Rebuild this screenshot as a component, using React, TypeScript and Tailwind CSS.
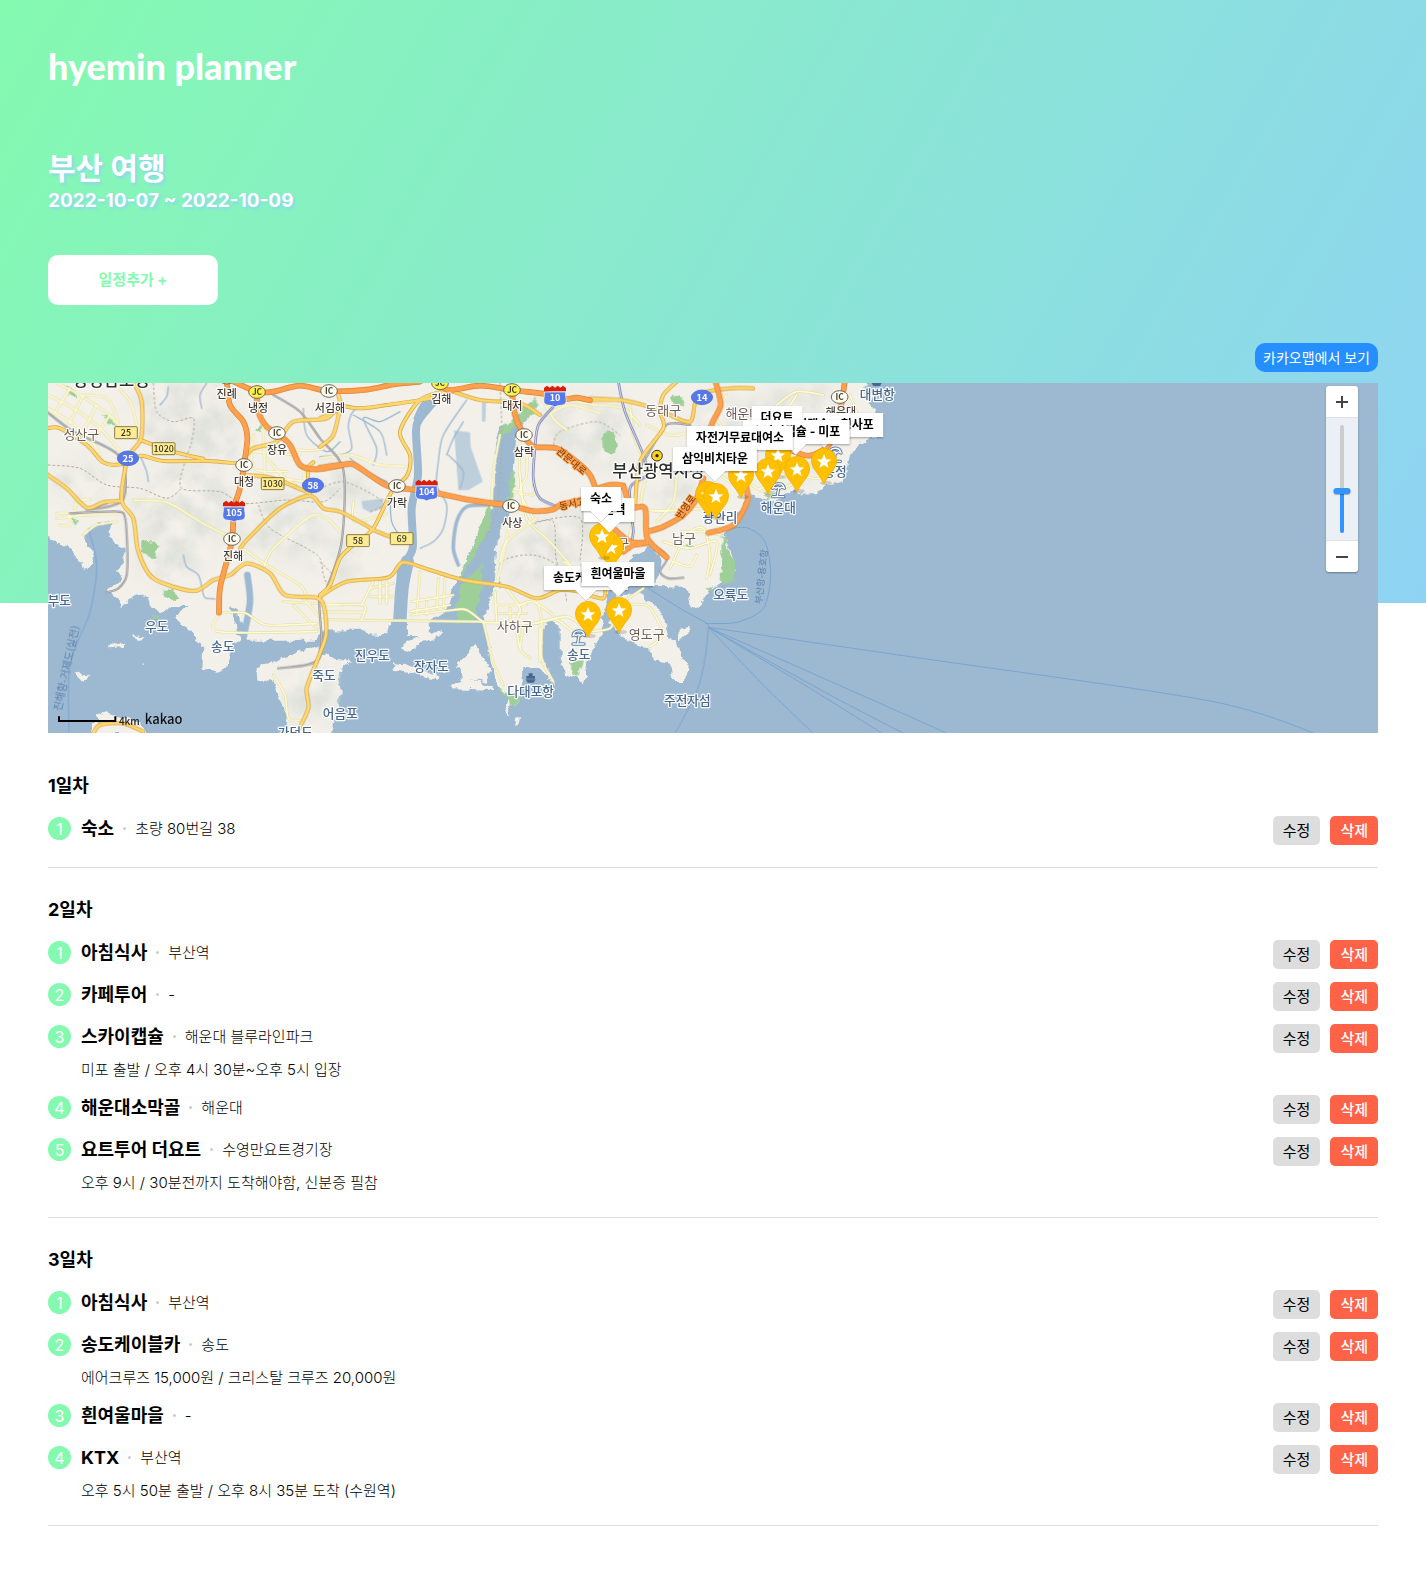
import React, { useState } from "react";

/* ---------- trip data ---------- */

type Plan = { title: string; place: string; note?: string };
type Day = { name: string; plans: Plan[] };

const days: Day[] = [
  { name: "1일차", plans: [{ title: "숙소", place: "초량 80번길 38" }] },
  {
    name: "2일차",
    plans: [
      { title: "아침식사", place: "부산역" },
      { title: "카페투어", place: "-" },
      { title: "스카이캡슐", place: "해운대 블루라인파크", note: "미포 출발 / 오후 4시 30분~오후 5시 입장" },
      { title: "해운대소막골", place: "해운대" },
      { title: "요트투어 더요트", place: "수영만요트경기장", note: "오후 9시 / 30분전까지 도착해야함, 신분증 필참" },
    ],
  },
  {
    name: "3일차",
    plans: [
      { title: "아침식사", place: "부산역" },
      { title: "송도케이블카", place: "송도", note: "에어크루즈 15,000원 / 크리스탈 크루즈 20,000원" },
      { title: "흰여울마을", place: "-" },
      { title: "KTX", place: "부산역", note: "오후 5시 50분 출발 / 오후 8시 35분 도착 (수원역)" },
    ],
  },
];

/* ---------- map drawing ---------- */

type Pt = [number, number];
const parse = (s: string): Pt[] => s.trim().split(/\s+/).map((p) => p.split(",").map(Number) as Pt);

/* Catmull-Rom curve through the points */
function curve(s: string, closed = false) {
  const p = parse(s);
  const n = p.length;
  const at = (i: number): Pt => (closed ? p[(i + n) % n] : p[Math.max(0, Math.min(n - 1, i))]);
  let d = `M${p[0][0]},${p[0][1]}`;
  for (let i = 0; i < (closed ? n : n - 1); i++) {
    const [a, b, c, e] = [at(i - 1), at(i), at(i + 1), at(i + 2)];
    d += `C${b[0] + (c[0] - a[0]) / 7},${b[1] + (c[1] - a[1]) / 7} ${c[0] - (e[0] - b[0]) / 7},${c[1] - (e[1] - b[1]) / 7} ${c[0]},${c[1]}`;
  }
  return closed ? d + "Z" : d;
}
const poly = (s: string) => "M" + s.trim().split(/\s+/).join("L") + "Z";

/* The map is drawn in three sheets; each has its own origin. */
const WEST = "translate(-24 -24)";
const MID = "translate(816 -24)";
const EAST = "translate(1446 -24)";

const land: [string, string[]][] = [
  [
    WEST,
    [
      "0,0 920,0 920,766 620,766 600,740 590,700 570,690 600,800 576,800 570,865 535,890 487,880 490,810 470,800 460,770 420,750 410,720 440,690 400,690 360,715 350,695 330,690 320,670 290,655 235,700 240,680 200,650 235,625 250,600 225,590 255,560 250,520 220,500 205,470 212,445 160,450 128,478 140,500 155,530 155,565 135,592 130,570 100,540 80,510 40,505 24,485 0,485",
      "620,720 650,700 700,720 920,740 920,766 840,766 835,797 626,797 612,760",
      "650,880 835,808 840,845 760,870 700,915 652,920",
      "690,910 740,880 835,842 860,840 880,850 935,860 900,885 905,960 870,1080 735,1080 745,1020 715,960",
      "160,1080 150,1050 185,1048 165,1010 230,1022 290,1040 330,1080",
      "105,895 125,890 148,908 130,920",
      "205,812 250,800 248,815 215,820",
      "268,784 290,778 318,786 295,792",
      "300,866 308,862 310,870",
    ],
  ],
  [
    MID,
    [
      "-20,0 700,0 700,60 540,160 528,210 525,320 490,440 400,640 385,700 330,738 325,780 258,780 262,736 212,740 205,778 145,775 138,764 -20,764",
      "245,820 280,785 370,765 360,782 300,810 270,830",
      "218,862 250,865 320,890 360,905 355,918 290,900 225,884",
      "464,806 485,840 508,880 500,920 450,910 520,935 515,945 400,940 395,930 430,920 410,870 430,850 450,830",
      "700,0 840,0 840,700 848,770 825,810 805,860 800,905 785,925 765,905 735,890 722,850 722,750 690,735 665,760 668,860 690,890 700,935 680,900 650,880 615,875 600,890 608,965 575,970 545,945 525,910 505,820 490,740 520,640 530,500 555,440 580,300 590,170 640,110",
      "360,882 385,880 375,890",
      "568,970 590,965 600,975 570,1000 565,1018 555,1010",
      "585,1052 590,1030 600,1030 595,1050",
    ],
  ],
  [
    EAST,
    [
      "170,0 1020,0 1000,50 1038,60 1018,90 1055,130 1040,190 1010,195 985,205 960,240 948,290 940,325 890,330 860,360 815,362 790,345 740,375 690,372 650,355 640,400 600,455 580,478 600,530 617,590 545,640 525,670 505,692 480,695 470,640 455,635 370,632 390,600 395,550 352,510 300,555 265,590 235,640 222,700 218,765 170,800 150,850 130,800 110,740 100,700 100,300",
      "232,700 260,662 330,655 362,688 400,720 415,790 440,800 452,850 482,868 480,885 462,915 430,915 425,870 358,848 355,820 310,808 270,780 240,745",
      "440,780 455,762 482,755 480,768 450,798",
    ],
  ],
];

const hills: [string, number, number, number, number][] = [
  [WEST, 400, 120, 130, 110],
  [WEST, 430, 400, 150, 140],
  [WEST, 120, 320, 100, 60],
  [WEST, 520, 200, 80, 170],
  [WEST, 720, 450, 140, 100],
  [WEST, 390, 560, 90, 70],
  [WEST, 780, 960, 50, 90],
  [WEST, 470, 60, 90, 60],
  [MID, 70, 330, 100, 70],
  [MID, 60, 560, 90, 60],
  [MID, 790, 160, 120, 100],
  [MID, 660, 560, 120, 90],
  [MID, 10, 960, 40, 90],
  [MID, 820, 430, 100, 60],
  [EAST, 190, 170, 120, 110],
  [EAST, 600, 150, 110, 90],
  [EAST, 820, 90, 120, 70],
  [EAST, 90, 500, 90, 90],
  [EAST, 440, 360, 70, 60],
  [EAST, 830, 280, 60, 40],
];

const parks: [string, string[]][] = [
  [
    WEST,
    [
      "305,500 325,498 355,512 352,545 320,545 300,525",
      "370,645 395,642 415,668 400,675 375,668",
      "65,30 95,45 120,75 90,60",
      "180,115 210,130 235,155 205,145",
      "640,165 670,150 665,175",
      "90,430 120,445 100,450",
      "335,725 352,728 348,740",
    ],
  ],
  [
    MID,
    [
      "655,65 640,120 580,160 535,195 545,160 600,110",
      "518,380 505,470 470,530 425,600 412,612 450,530 480,460 500,400",
      "570,295 586,293 580,370 568,380",
      "492,562 485,640 470,700 455,750 435,740 408,745 415,660 440,610",
      "850,190 865,165 885,180 888,230 870,240 852,220",
      "760,860 790,855 770,910 752,880",
      "530,935 565,955 605,970 575,995 565,970",
      "530,612 550,620 545,630",
    ],
  ],
  [
    EAST,
    [
      "222,190 235,165 250,175 258,230 240,240 222,225",
      "420,62 450,68 468,90 440,92 425,80",
      "575,490 582,484 595,530 618,575 608,620 585,632 572,600",
      "705,360 720,352 722,368 708,375",
      "118,862 168,855 140,905",
      "530,635 548,630 550,645",
      "465,510 485,505 500,520 480,525",
    ],
  ],
];

const streams: [string, string][] = [
  [WEST, "500,24 480,60 485,100"],
  [WEST, "385,35 380,65 360,90"],
  [WEST, "300,240 320,290 325,320"],
  [WEST, "430,540 440,575 475,600 488,650 495,668 525,672"],
  [WEST, "900,200 860,230 800,180 790,100"],
  [MID, "190,95 110,100 85,150 95,220 60,240 0,245"],
  [MID, "90,250 140,290 200,320"],
  [MID, "210,350 215,440 245,490"],
  [MID, "440,75 370,180 355,260 350,330 380,390 370,460 340,500 300,520"],
  [MID, "240,110 180,140 130,130 170,220 160,270"],
  [MID, "100,120 180,170 200,240"],
  [MID, "430,140 400,190 380,240"],
  [MID, "385,240 430,290 420,340"],
];
const rivers: [string, string, number][] = [
  [MID, "350,70 300,130 288,170 294,300 275,400 278,520 245,580 240,650 228,780", 24],
  [MID, "350,60 310,90 290,130", 18],
  [MID, "262,560 246,640 238,770", 40],
  [MID, "500,390 440,395 410,440 400,520 415,570", 11],
  [WEST, "622,600 630,680 612,780", 20],
];

const smallRoads: [string, string][] = [
  [WEST, "24,60 100,100 180,160 250,240"],
  [WEST, "24,100 90,140 150,190 180,240"],
  [WEST, "50,24 120,60 220,130 240,170"],
  [WEST, "90,40 40,120"],
  [WEST, "130,60 80,160"],
  [WEST, "170,90 120,190"],
  [WEST, "210,120 150,210"],
  [WEST, "120,60 200,70 235,140"],
  [WEST, "220,24 270,80 290,150"],
  [WEST, "280,376 380,382 480,440 575,490"],
  [WEST, "50,430 130,420 235,418"],
  [WEST, "105,415 110,380 150,372"],
  [WEST, "130,480 170,450 230,440"],
  [WEST, "50,415 85,415 90,450 60,450"],
  [WEST, "537,715 537,770 830,770"],
  [WEST, "537,714 615,714 680,750 830,745"],
  [WEST, "600,515 680,570 780,630 800,670"],
  [WEST, "670,580 700,520 810,425 860,430 900,470"],
  [WEST, "730,680 900,690"],
  [WEST, "760,690 830,760"],
  [WEST, "790,670 850,740"],
  [WEST, "700,900 735,960 745,1030 780,1035"],
  [WEST, "640,180 640,280 740,290"],
  [WEST, "670,150 675,300"],
  [WEST, "640,230 780,240"],
  [WEST, "720,300 790,340 790,280"],
  [WEST, "770,225 850,220 890,150"],
  [WEST, "680,250 740,310 810,320"],
  [MID, "0,734 490,740"],
  [MID, "0,690 130,690 125,733"],
  [MID, "0,710 130,712"],
  [MID, "150,640 220,625"],
  [MID, "150,665 220,665"],
  [MID, "180,620 180,685"],
  [MID, "200,620 200,685"],
  [MID, "125,690 160,620"],
  [MID, "275,680 400,660"],
  [MID, "270,710 390,690"],
  [MID, "300,590 290,720"],
  [MID, "355,610 350,700"],
  [MID, "375,610 370,700"],
  [MID, "320,680 320,720"],
  [MID, "275,720 400,705 440,705 490,742"],
  [MID, "100,380 105,440 200,415"],
  [MID, "0,250 90,240 180,270 260,275"],
  [MID, "540,180 520,290 515,400"],
  [MID, "600,200 600,300 620,430 690,500 760,580"],
  [MID, "620,190 620,300 600,350 640,430"],
  [MID, "580,350 640,360 640,330"],
  [MID, "660,60 700,130 740,165"],
  [MID, "680,120 750,90 840,115"],
  [MID, "570,440 550,540 530,630"],
  [MID, "490,740 520,860 550,930"],
  [MID, "490,742 640,745 740,725 810,770"],
  [MID, "525,650 530,740"],
  [MID, "560,640 600,700 590,740 600,820 630,850"],
  [MID, "650,670 665,740 665,850 700,920"],
  [MID, "530,690 620,690"],
  [MID, "535,715 620,715"],
  [MID, "600,690 640,680 700,720"],
  [MID, "610,740 600,820"],
  [MID, "570,700 570,742"],
  [MID, "650,430 560,500 540,560"],
  [EAST, "140,80 200,90 280,100 330,150"],
  [EAST, "300,90 310,180 340,260 320,340"],
  [EAST, "350,150 420,180 500,170"],
  [EAST, "360,270 340,400 520,400"],
  [EAST, "440,300 430,380 380,440"],
  [EAST, "560,290 600,320 660,330 720,355 790,325"],
  [EAST, "590,60 560,130 620,200 650,270"],
  [EAST, "640,300 760,290 850,310 890,310"],
  [EAST, "690,340 740,330 770,300"],
  [EAST, "420,580 470,480 520,460 540,540 530,610"],
  [EAST, "400,500 480,520 560,500 540,600"],
  [EAST, "430,560 480,575 500,540"],
  [EAST, "455,470 520,470 570,480"],
  [EAST, "250,700 340,640"],
  [EAST, "180,770 240,760 255,720"],
  [EAST, "290,690 350,690 380,730 400,780 360,815"],
  [EAST, "20,745 80,735 150,790"],
  [EAST, "30,760 30,860"],
  [EAST, "100,560 160,600 180,680"],
  [EAST, "290,340 310,420 290,520"],
  [EAST, "800,60 760,120 700,180"],
  [EAST, "880,60 800,50 740,90"],
  [EAST, "960,60 980,120 960,180"],
];

const yellowRoads: [string, string][] = [
  [WEST, "280,20 305,80 303,190 263,250 245,375 280,430 295,530 340,610 460,648 520,615 570,600 620,565 690,595 735,660 830,668 853,700 858,780 830,860 800,940 805,1000 770,1075"],
  [WEST, "20,160 60,160 140,210 190,262 240,268 300,242 370,258 500,258 590,265"],
  [WEST, "300,195 400,230 490,252"],
  [WEST, "20,298 80,340 140,398 190,382 240,378"],
  [WEST, "600,520 625,490 720,400 810,362 850,400 900,410 976,450 1000,465 1050,485"],
  [WEST, "612,250 640,220 710,200 760,140 860,130 900,80"],
  [WEST, "615,300 700,310 810,355"],
  [WEST, "160,1075 180,1050 250,1045 310,1070"],
  [WEST, "805,350 805,280 820,262"],
  [MID, "0,130 60,100 55,60"],
  [MID, "0,215 40,180 60,100"],
  [MID, "385,45 300,75 240,170 270,240 262,300 215,350 160,460 100,510 60,550 30,630 0,660"],
  [MID, "0,665 80,620 205,607 248,562 330,585 430,615 560,635 650,670 720,645 780,650"],
  [MID, "385,45 330,70 200,90 120,100 55,90"],
  [MID, "660,120 600,85 480,75 385,45"],
  [MID, "815,75 900,75"],
  [EAST, "180,70 270,75 340,90 400,110 480,140 505,60 600,40 670,40"],
  [EAST, "440,20 400,60 390,110 400,160 330,260 315,400"],
  [EAST, "150,650 220,670 225,620"],
];

const orangeRoads: [string, string][] = [
  [WEST, "560,15 570,90 610,140 622,190 612,270 600,340 582,400 577,490 560,560 540,640 537,713"],
  [WEST, "570,15 650,50 700,50 780,32 865,48 980,44 1060,28 1140,20"],
  [WEST, "650,50 655,110 680,155 712,175 750,210 780,270 830,283 900,272"],
  [MID, "0,278 60,270 100,268 150,300 210,335 320,348 450,375 570,392 640,408 700,403 720,390 800,370 830,352 910,332"],
  [MID, "340,15 385,45 480,32 575,45 700,60 740,72 770,68 810,76"],
  [MID, "575,45 585,120 612,180 640,215 710,220 770,260 810,300 830,350"],
  [EAST, "555,15 572,90 545,150 550,220"],
  [EAST, "190,345 240,330 280,335 300,395 345,400 352,490 410,547"],
  [EAST, "352,470 400,455 460,420 500,370 520,310"],
  [EAST, "245,455 300,500 350,503 310,510 280,530"],
  [EAST, "650,340 652,380 610,450 535,474"],
  [EAST, "780,225 840,242 900,205 930,110 945,15"],
];

const rails: [string, string][] = [
  [WEST, "20,110 100,170 240,245 248,375 140,405 200,385"],
  [WEST, "90,415 200,410 250,415 260,480 260,600 235,640 200,652"],
  [WEST, "700,60 780,110 840,190 910,285 905,500 860,640 838,680 838,850 715,880"],
  [EAST, "300,500 350,505 400,530 410,555 390,590 415,610 460,608"],
  [EAST, "330,280 400,160 430,145 480,150"],
];
const ktxRails: [string, string][] = [
  [MID, "700,95 655,150 645,220 640,310 660,370 720,398"],
  [EAST, "265,20 285,110 340,240 350,300 300,340 310,470 300,510"],
];

const trails: [string, string][] = [
  [WEST, "340,24 350,110 400,140 460,130 455,200 435,260 425,340 540,350 610,385 740,375 850,380 900,340"],
  [WEST, "24,270 120,280 200,330 300,340 380,370 425,340"],
  [WEST, "655,390 690,460 800,520 840,550 850,600 870,650"],
  [MID, "0,340 70,320 160,360 190,390 150,410"],
  [MID, "540,640 545,560 640,540 720,580 740,680"],
  [MID, "700,210 720,170 830,140 900,180"],
  [MID, "540,24 545,200 530,400 490,500"],
  [MID, "0,560 40,600"],
  [MID, "650,440 780,430 780,560"],
  [EAST, "540,200 620,180 700,100"],
  [EAST, "0,450 70,440 80,560 130,620"],
];

const ferries = [
  "355,640 450,700 530,745 535,760",
  "535,757 1140,845 2040,978 2380,1085",
  "535,757 1140,1025 1270,1085",
  "535,757 900,960 1140,1085",
  "535,757 840,940 1080,1090",
  "535,757 700,930 860,1085",
  "535,757 525,850 500,950 430,1085",
  "525,745 620,742 700,700 722,600 705,500 650,458 580,465",
];

type Label = { g: string; x: number; y: number; t: string; k: "sea" | "ic" | "district" | "big" };
const labels: Label[] = [
  { g: WEST, x: 214, y: 34, t: "창경남도청", k: "big" },
  { g: WEST, x: 124, y: 192, t: "성산구", k: "district" },
  { g: WEST, x: 560, y: 69, t: "진례", k: "ic" },
  { g: WEST, x: 654, y: 111, t: "냉정", k: "ic" },
  { g: WEST, x: 870, y: 111, t: "서김해", k: "ic" },
  { g: WEST, x: 711, y: 237, t: "장유", k: "ic" },
  { g: WEST, x: 612, y: 334, t: "대청", k: "ic" },
  { g: WEST, x: 579, y: 555, t: "진해", k: "ic" },
  { g: WEST, x: 58, y: 690, t: "부도", k: "sea" },
  { g: WEST, x: 350, y: 768, t: "우도", k: "sea" },
  { g: WEST, x: 548, y: 829, t: "송도", k: "sea" },
  { g: WEST, x: 852, y: 915, t: "죽도", k: "sea" },
  { g: WEST, x: 766, y: 1085, t: "가덕도", k: "sea" },
  { g: MID, x: 61, y: 1029, t: "어음포", k: "sea" },
  { g: MID, x: 364, y: 84, t: "김해", k: "ic" },
  { g: MID, x: 577, y: 106, t: "대저", k: "ic" },
  { g: MID, x: 612, y: 243, t: "삼락", k: "ic" },
  { g: MID, x: 231, y: 396, t: "가락", k: "ic" },
  { g: MID, x: 577, y: 456, t: "사상", k: "ic" },
  { g: MID, x: 584, y: 768, t: "사하구", k: "district" },
  { g: MID, x: 157, y: 856, t: "진우도", k: "sea" },
  { g: MID, x: 334, y: 889, t: "장자도", k: "sea" },
  { g: MID, x: 632, y: 964, t: "다대포항", k: "sea" },
  { g: EAST, x: 146, y: 853, t: "송도", k: "sea" },
  { g: EAST, x: 400, y: 121, t: "동래구", k: "district" },
  { g: EAST, x: 658, y: 129, t: "해운대구", k: "district" },
  { g: EAST, x: 933, y: 124, t: "해운대", k: "ic" },
  { g: EAST, x: 1042, y: 72, t: "대변항", k: "sea" },
  { g: EAST, x: 385, y: 306, t: "부산광역시청", k: "big" },
  { g: EAST, x: 462, y: 504, t: "남구", k: "district" },
  { g: EAST, x: 262, y: 519, t: "동구", k: "district" },
  { g: EAST, x: 570, y: 442, t: "광안리", k: "sea" },
  { g: EAST, x: 745, y: 411, t: "해운대", k: "sea" },
  { g: EAST, x: 915, y: 303, t: "송정", k: "sea" },
  { g: EAST, x: 602, y: 672, t: "오륙도", k: "sea" },
  { g: EAST, x: 350, y: 792, t: "영도구", k: "district" },
  { g: EAST, x: 472, y: 990, t: "주전자섬", k: "sea" },
];
const labelStyle = {
  ic: { fontSize: 33, fill: "#463b35", fontWeight: 500 },
  district: { fontSize: 39, fill: "#6b5a52", fontWeight: 400 },
  sea: { fontSize: 38, fill: "#47678f", fontWeight: 500 },
  big: { fontSize: 50, fill: "#2d2d2d", fontWeight: 500 },
};

const junctions: [string, number, number, "IC" | "JC"][] = [
  [WEST, 560, 8, "JC"],
  [WEST, 651, 51, "JC"],
  [WEST, 867, 48, "IC"],
  [WEST, 711, 174, "IC"],
  [WEST, 612, 270, "IC"],
  [WEST, 576, 492, "IC"],
  [MID, 360, 25, "JC"],
  [MID, 576, 45, "JC"],
  [MID, 612, 180, "IC"],
  [MID, 231, 333, "IC"],
  [MID, 573, 393, "IC"],
  [EAST, 929, 66, "IC"],
];
const shields: [string, number, number, string][] = [
  [WEST, 582, 408, "105"],
  [MID, 320, 345, "104"],
  [MID, 705, 63, "10"],
];
const ovals: [string, number, number, string][] = [
  [WEST, 264, 250, "25"],
  [WEST, 819, 331, "58"],
  [EAST, 516, 67, "14"],
];
const plates: [string, number, number, string][] = [
  [WEST, 258, 173, "25"],
  [WEST, 371, 221, "1020"],
  [WEST, 698, 326, "1030"],
  [MID, 114, 497, "58"],
  [MID, 245, 491, "69"],
];

function Roads({ items, casing, fill, wide, thin }: { items: [string, string][]; casing: string; fill: string; wide: number; thin: number }) {
  return (
    <g fill="none" strokeLinecap="round" strokeLinejoin="round">
      {items.map(([g, s], i) => (
        <path key={"c" + i} transform={g} d={curve(s)} stroke={casing} strokeWidth={wide} />
      ))}
      {items.map(([g, s], i) => (
        <path key={"f" + i} transform={g} d={curve(s)} stroke={fill} strokeWidth={thin} />
      ))}
    </g>
  );
}

function Beach({ x, y }: { x: number; y: number }) {
  const d = "M-17,-6C-14,-24 14,-26 18,-6C12,-11 8,-10 5,-6C1,-11 -4,-11 -7,-6C-10,-9 -14,-9 -17,-6ZM1,-6L-3,17M-17,19H16";
  return (
    <g transform={`translate(${x} ${y})`} fill="none" strokeLinecap="round" strokeLinejoin="round">
      <path d={d} stroke="#5c81ab" strokeWidth="10" />
      <path d={d} stroke="#fff" strokeWidth="4" />
    </g>
  );
}

function MapDrawing() {
  return (
    <svg
      className="absolute inset-0 h-full w-full"
      viewBox="0 0 3990 1050"
      preserveAspectRatio="xMinYMin slice"
      aria-hidden="true"
      fontFamily='"Noto Sans CJK KR", sans-serif'
      textAnchor="middle"
    >
      <defs>
        <filter id="coast" x="0" y="0" width="100%" height="100%">
          <feTurbulence type="fractalNoise" baseFrequency="0.035" numOctaves="3" seed="4" />
          <feDisplacementMap in="SourceGraphic" scale="26" xChannelSelector="R" yChannelSelector="G" />
        </filter>
        <filter id="soft" x="-40%" y="-40%" width="180%" height="180%">
          <feGaussianBlur stdDeviation="26" />
        </filter>
        <filter id="relief" x="0" y="0" width="100%" height="100%">
          <feTurbulence type="fractalNoise" baseFrequency="0.014" numOctaves="4" seed="9" />
          <feColorMatrix values="0 0 0 0 0.74  0 0 0 0 0.76  0 0 0 0 0.71  2.2 0 0 0 -0.62" />
        </filter>
        <mask id="hillMask">
          <g filter="url(#soft)">
            {hills.map(([g, x, y, rx, ry], i) => (
              <ellipse key={i} transform={g} cx={x} cy={y} rx={rx} ry={ry} fill="#fff" />
            ))}
          </g>
        </mask>
        <clipPath id="landClip">
          {land.map(([g, list]) => list.map((s) => <path key={s} transform={g} d={poly(s)} />))}
        </clipPath>
      </defs>
      <rect width="3990" height="1050" fill="#9db9d1" />
      <g filter="url(#coast)" fill="#f3f0ea">
        <rect width="3990" height="1050" fill="#9db9d1" />
        {land.map(([g, list]) => list.map((s) => <path key={s} transform={g} d={poly(s)} />))}
      </g>
      <g clipPath="url(#landClip)">
        <rect width="2600" height="1050" filter="url(#relief)" mask="url(#hillMask)" />
      </g>
      <g fill="#9fcf98" filter="url(#coast)">
        {parks.map(([g, list]) => list.map((s) => <path key={s} transform={g} d={poly(s)} />))}
      </g>
      <g transform={MID} fill="#bccfdb">
        <path d={poly("402,166 450,172 452,215 488,320 445,345 415,345")} />
        <path d={poly("125,378 190,370 188,400 150,412 128,400")} />
        <path d={poly("486,82 498,82 496,140 486,140")} />
      </g>
      <g fill="none" stroke="#9db9d1" strokeLinecap="round">
        {streams.map(([g, s], i) => (
          <path key={i} transform={g} d={curve(s)} strokeWidth="4" />
        ))}
        {rivers.map(([g, s, w], i) => (
          <path key={i} transform={g} d={curve(s)} strokeWidth={w} />
        ))}
      </g>
      <g fill="none" stroke="#b3ab98" strokeWidth="3" strokeDasharray="8 6">
        {trails.map(([g, s], i) => (
          <path key={i} transform={g} d={curve(s)} />
        ))}
      </g>
      <g fill="none" stroke="#7aa3cf" strokeWidth="3">
        {ferries.map((s, i) => (
          <path key={i} transform={EAST} d={curve(s)} />
        ))}
        <path transform={WEST} d={curve("145,460 170,570 150,710 90,870 87,1085")} />
      </g>
      <Roads items={smallRoads} casing="#ddd8a6" fill="#fffbd0" wide={8} thin={5} />
      <Roads items={rails} casing="#9a9a9c" fill="#d4d4d6" wide={7} thin={2} />
      <Roads items={ktxRails} casing="#8288b5" fill="#d9dcf0" wide={8} thin={3} />
      <Roads items={yellowRoads} casing="#d3a545" fill="#ffd76e" wide={12} thin={8} />
      <Roads items={orangeRoads} casing="#d8812f" fill="#ffa04e" wide={17} thin={13} />

      <g stroke="#fffffff0" strokeWidth="7" strokeLinejoin="round" paintOrder="stroke">
        {labels.map((l, i) => (
          <text key={i} transform={l.g} x={l.x} y={l.y} {...labelStyle[l.k]}>
            {l.t}
          </text>
        ))}
      </g>
      <g fill="#8a4a12" stroke="#ffa04e" strokeWidth="5" paintOrder="stroke" fontSize="29" fontWeight="500">
        <g transform={MID}>
          <text transform="translate(748 266) rotate(40)">관문대로</text>
          <text transform="translate(785 391) rotate(-12)">동서고가로</text>
        </g>
        <text transform="translate(1922 378) rotate(-55)">번영로</text>
      </g>
      <g fill="#5e83b2" fontSize="31">
        <text transform="translate(66 858) rotate(-78)">진해항-거제도(실전)</text>
        <text transform="translate(2150 582) rotate(-84)" fontSize="28">
          부산항-용호항
        </text>
      </g>

      {junctions.map(([g, x, y, t], i) => (
        <g key={i} transform={g}>
          <ellipse cx={x} cy={y} rx="25" ry="19" fill={t === "IC" ? "#fffef2" : "#fff04a"} stroke="#6f6757" strokeWidth="3" />
          <text x={x} y={y + 9} fontSize="25" fontWeight="700" fill="#4a4136">
            {t}
          </text>
        </g>
      ))}
      {shields.map(([g, x, y, t], i) => (
        <g key={i} transform={`${g} translate(${x} ${y})`}>
          <path d="M-32,-12H32C30,4 38,14 30,24C24,30 8,26 0,33C-8,26 -24,30 -30,24C-38,14 -30,4 -32,-12Z" fill="#5678e8" stroke="#fff" strokeWidth="2" />
          <path d="M-33,-14V-24L-24,-31L-16,-25L-8,-31L0,-25L8,-31L16,-25L24,-31L33,-24V-14Z" fill="#d81e0c" />
          <text y="16" fontSize="27" fontWeight="700" fill="#fff">
            {t}
          </text>
        </g>
      ))}
      {ovals.map(([g, x, y, t], i) => (
        <g key={i} transform={g}>
          <ellipse cx={x} cy={y} rx="32" ry="22" fill="#5678e8" stroke="#3f62cf" strokeWidth="2" />
          <text x={x} y={y + 10} fontSize="28" fontWeight="700" fill="#fff">
            {t}
          </text>
        </g>
      ))}
      {plates.map(([g, x, y, t], i) => (
        <g key={i} transform={g}>
          <rect x={x - 34} y={y - 18} width="68" height="36" rx="3" fill="#fbec94" stroke="#8d7a3c" strokeWidth="3" />
          <text x={x} y={y + 9} fontSize="27" fontWeight="500" fill="#3b3420">
            {t}
          </text>
        </g>
      ))}

      <g transform={EAST}>
        <circle cx="381" cy="242" r="16" fill="#ffd21f" stroke="#333" strokeWidth="3" />
        <circle cx="381" cy="242" r="5" fill="#222" />
        <Beach x={146} y={788} />
        <Beach x={745} y={346} />
        <Beach x={915} y={240} />
        <path d="M1025,24H1055L1050,33H1030Z" fill="#47678f" />
      </g>
      <path transform={MID} d="M626,895H638V903H645V911H619V903H626ZM617,913H647L641,923H623Z" fill="#47678f" />

      <g transform={WEST}>
        <path d="M57,1024V1038H226V1024" fill="none" stroke="#000" strokeWidth="6" />
        <text x="268" y="1050" fontSize="30" fontWeight="500" fill="#222">
          4km
        </text>
        <text x="371" y="1046" fontSize="39" fontWeight="500" fill="#111">
          kakao
        </text>
      </g>
    </svg>
  );
}

/* Pin tips and info windows, in pixels from the map's top-left corner */
const pins: Pt[] = [
  [563, 189],
  [554, 178],
  [540, 256],
  [571, 252],
  [730, 97],
  [693, 117],
  [720, 113],
  [749, 111],
  [776, 103],
  [660, 136],
  [668, 138],
];
const infos: { x: number; y: number; t: string }[] = [
  { x: 776, y: 30, t: "스카이캡슐 - 청사포" },
  { x: 729, y: 23, t: "더요트" },
  { x: 748, y: 37, t: "스카이캡슐 - 미포" },
  { x: 692, y: 43, t: "자전거무료대여소" },
  { x: 667, y: 64, t: "삼익비치타운" },
  { x: 561, y: 115, t: "부산역" },
  { x: 553, y: 104, t: "숙소" },
  { x: 538, y: 183, t: "송도케이블카" },
  { x: 570, y: 179, t: "흰여울마을" },
];

function Pin() {
  return (
    <svg width="26" height="38" viewBox="0 0 26 38" className="block overflow-visible" aria-hidden="true">
      <ellipse cx="15" cy="35" rx="6" ry="2" fill="#000" opacity="0.15" />
      <path d="M13,0.5C20,0.5 25.5,6 25.5,13C25.5,21 18,25 13,36C8,25 0.5,21 0.5,13C0.5,6 6,0.5 13,0.5Z" fill="#ffc000" stroke="#f3ae00" strokeWidth="0.8" />
      <path d="M13,6L15,11.2L20.3,11.4L16.1,14.7L17.6,20L13,17L8.4,20L9.9,14.7L5.7,11.4L11,11.2Z" fill="#fff" />
    </svg>
  );
}

function KakaoMap() {
  const [zoom, setZoom] = useState(5);
  return (
    <section aria-label="지도" className="relative h-[350px] w-full overflow-hidden bg-[#9db9d1]">
      <MapDrawing />
      {pins.map(([x, y], i) => (
        <div key={i} className="absolute -translate-x-1/2 -translate-y-full" style={{ left: x, top: y }}>
          <Pin />
        </div>
      ))}
      {infos.map((b) => (
        <div
          key={b.t}
          className="absolute flex h-6 -translate-x-1/2 items-center bg-white px-[9px] text-xs font-bold whitespace-nowrap text-black shadow-[0_1px_2px_rgba(0,0,0,0.35)]"
          style={{ left: b.x, top: b.y }}
        >
          {b.t}
          <svg width="22" height="11" viewBox="0 0 22 11" className="absolute top-full left-1/2 -translate-x-1/2" aria-hidden="true">
            <path d="M0,0H22L11,11Z" fill="#fff" />
            <path d="M0,0L11,11L22,0" fill="none" stroke="#000" strokeOpacity="0.15" />
          </svg>
        </div>
      ))}
      <div className="absolute top-[3px] right-5 flex w-8 flex-col overflow-hidden rounded-[3px] bg-white shadow-[0_1px_2px_rgba(0,0,0,0.35)]">
        <button type="button" aria-label="확대" onClick={() => setZoom(Math.min(14, zoom + 1))} className="flex h-8 items-center justify-center border-b border-[#dcdfe4]">
          <svg width="12" height="12" viewBox="0 0 12 12" aria-hidden="true">
            <path d="M6,0V12M0,6H12" stroke="#444" strokeWidth="2" />
          </svg>
        </button>
        <div className="relative flex h-[122px] justify-center bg-[#ebeff6] py-[7px]">
          <div className="flex w-1 flex-col overflow-hidden rounded-full bg-[#ccc]">
            <div className="flex-1" />
            <div className="bg-[#3396ff]" style={{ height: `${(zoom / 13) * 100}%` }} />
          </div>
          <div
            className="absolute left-1/2 h-[6px] w-[17px] -translate-x-1/2 rounded-[3px] bg-[#3396ff] shadow-[0_1px_1px_rgba(0,0,0,0.3)]"
            style={{ bottom: 4 + (zoom / 13) * 108 }}
          />
          <input
            type="range"
            aria-label="지도 확대 수준"
            min={0}
            max={13}
            value={zoom}
            onChange={(e) => setZoom(Number(e.target.value))}
            className="absolute inset-0 h-full w-full cursor-pointer opacity-0 [direction:rtl] [writing-mode:vertical-lr]"
          />
        </div>
        <button type="button" aria-label="축소" onClick={() => setZoom(Math.max(0, zoom - 1))} className="flex h-8 items-center justify-center border-t border-[#dcdfe4]">
          <svg width="12" height="12" viewBox="0 0 12 12" aria-hidden="true">
            <path d="M0,6H12" stroke="#444" strokeWidth="2" />
          </svg>
        </button>
      </div>
    </section>
  );
}

/* ---------- schedule ---------- */

function PlanRow({ plan, index }: { plan: Plan; index: number }) {
  return (
    <li>
      <div className="flex h-[29px] items-start justify-between">
        <div className="flex h-[25px] items-center">
          <span className="flex size-[23px] items-center justify-center rounded-full bg-[#84fab0] text-base text-white">{index}</span>
          <h3 className="ml-[10px] text-lg leading-6 font-bold">{plan.title}</h3>
          <span className="mx-[9px] size-[3px] rounded-full bg-[#ccc]" />
          <p className="text-[15px] leading-6 font-light">{plan.place}</p>
        </div>
        <div className="flex gap-[10px]">
          <button type="button" className="h-[29px] rounded-[5px] bg-[#ddd] px-[10px] text-[15px] leading-5">
            수정
          </button>
          <button type="button" className="h-[29px] rounded-[5px] bg-[#ff6347] px-[10px] text-[15px] leading-5 font-medium text-white">
            삭제
          </button>
        </div>
      </div>
      {plan.note && <p className="mt-1 pl-[33px] text-[15px] leading-[25px] font-light">{plan.note}</p>}
    </li>
  );
}

export default function App() {
  return (
    <div className="min-h-screen bg-white bg-[linear-gradient(120deg,#84fab0_0%,#8fd3f4_100%)] bg-[length:100%_603px] bg-no-repeat px-12 pb-16 font-['Inter','Noto_Sans_CJK_KR',sans-serif] text-black">
      <header className="pt-10 text-white">
        <a href="#" className="block font-['Lato',sans-serif] text-[36px] leading-[52px] font-black">
          hyemin planner
        </a>
        <h1 className="mt-[55px] text-[30px] leading-[42px] font-bold [text-shadow:2px_2px_3px_#8fd3f4]">부산 여행</h1>
        <p className="text-[19px] leading-6 font-bold [text-shadow:2px_2px_3px_#8fd3f4]">2022-10-07 ~ 2022-10-09</p>
        <button type="button" className="mt-[42px] block h-[50px] w-[170px] rounded-[10px] bg-white text-[15px] font-bold text-[#84fab0]">
          일정추가 +
        </button>
      </header>
      <div className="mt-[38px] mb-[11px] flex justify-end">
        <button type="button" className="h-[29px] rounded-[10px] bg-[#258fff] px-2 text-sm text-white">
          카카오맵에서 보기
        </button>
      </div>
      <KakaoMap />
      <main className="mt-[11px]">
        {days.map((day) => (
          <section key={day.name} className="border-b border-[#ddd] pt-7 pb-[22px]">
            <h2 className="mb-4 text-lg leading-7 font-bold">{day.name}</h2>
            <ol className="flex flex-col gap-[13px]">
              {day.plans.map((plan, i) => (
                <PlanRow key={plan.title} plan={plan} index={i + 1} />
              ))}
            </ol>
          </section>
        ))}
      </main>
    </div>
  );
}
